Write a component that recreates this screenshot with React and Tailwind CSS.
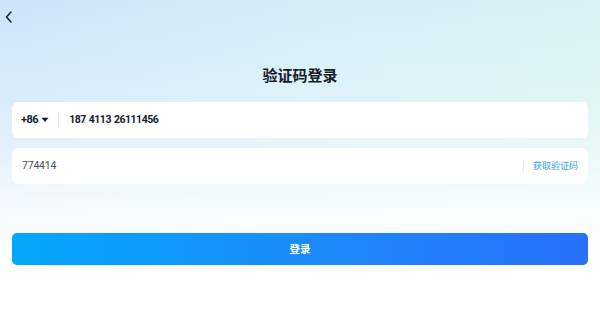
import React from "react";

const num = { fontFamily: 'Roboto, "Noto Sans CJK SC", sans-serif' };

export default function App() {
  return (
    <div
      className="relative w-[600px] h-[319px] overflow-hidden bg-white"
      style={{ fontFamily: '"Noto Sans CJK SC", "Noto Sans", sans-serif' }}
    >
      <div className="absolute inset-0 bg-[linear-gradient(100deg,#cbe4f9_0%,#d3eef6_50%,#d6f3f1_100%)]" />
      <div className="absolute inset-0 bg-[linear-gradient(180deg,rgba(255,255,255,0)_0%,rgba(255,255,255,0.35)_40%,rgba(255,255,255,0.85)_68%,#ffffff_88%)]" />
      <div className="relative flex flex-col">
        <div className="h-[34px] flex items-center pl-[4px]">
          <svg width="10" height="14" viewBox="0 0 10 14" fill="none">
            <path d="M7 2 L2.5 7 L7 12" stroke="#1b2333" strokeWidth="1.6" strokeLinecap="round" strokeLinejoin="round" />
          </svg>
        </div>
        <div className="h-[68px] flex items-center justify-center pt-[13px]">
          <span className="text-[15px] font-bold text-[#151c28] leading-none">验证码登录</span>
        </div>
        <div className="px-3 flex flex-col gap-[10px]">
          <div className="h-[36px] bg-white rounded-[6px] flex items-center pl-[9px]">
            <span className="text-[11px] font-bold text-[#151c28] tracking-[-0.5px]" style={num}>+86</span>
            <svg width="8" height="6" viewBox="0 0 8 6" className="ml-[3px]">
              <path d="M0.5 0.8 L7.5 0.8 L4 5 Z" fill="#151c28" />
            </svg>
            <div className="w-px h-[14px] bg-[#e8ecf0] ml-[9px]" />
            <span className="ml-[10px] text-[10.5px] font-bold text-[#151c28] tracking-[-0.5px] [word-spacing:1px]" style={num}>187 4113 26111456</span>
          </div>
          <div className="h-[36px] bg-white rounded-[6px] flex items-center pl-[10px] pr-[10px]">
            <span className="text-[10.5px] text-[#4a4f57] tracking-[-0.2px]" style={num}>774414</span>
            <div className="flex-1" />
            <div className="w-px h-[14px] bg-[#e8ecf0] mr-[9px]" />
            <span className="text-[9px] text-[#3d9ee8]">获取验证码</span>
          </div>
        </div>
        <div className="px-3 mt-[49px]">
          <div className="h-[32px] rounded-[5px] bg-[linear-gradient(90deg,#03a8fc_0%,#1e86fb_60%,#2870fb_100%)] flex items-center justify-center">
            <span className="text-[10.5px] font-bold text-white">登录</span>
          </div>
        </div>
      </div>
    </div>
  );
}
